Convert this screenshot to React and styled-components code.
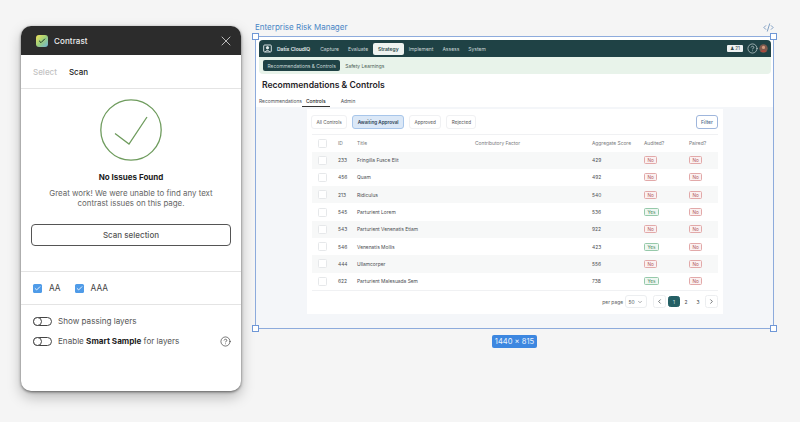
import React from "react";
import styled, { createGlobalStyle } from "styled-components";
import { X, Check, ChevronLeft, ChevronRight, ChevronDown, CodeXml, CircleHelp } from "lucide-react";

const Global = createGlobalStyle`
  html, body { margin: 0; padding: 0; background: #f5f5f5; }
  body { font-family: Inter, "Liberation Sans", sans-serif; width: 800px; height: 422px; overflow: hidden; }
`;
const Page = styled.div`
  display: flex; align-items: flex-start; gap: 14px; padding: 20px 0 0 21px;
`;
const Panel = styled.section`
  width: 220px; height: 365px; margin-top: 6px; background: #fff; border-radius: 10px;
  box-shadow: 0 1px 3px rgba(0,0,0,.55), 0 6px 14px rgba(0,0,0,.25);
  display: flex; flex-direction: column; overflow: hidden; color: #333;
`;
const PanelHead = styled.header`
  height: 29px; flex: none; background: #2c2c2c; color: #eee; display: flex; align-items: center;
  padding: 0 7px 0 15px; gap: 6px; font-size: 8px; font-weight: 500; letter-spacing: .1px;
  svg.close { margin-left: auto; }
`;
const Logo = styled.div`
  width: 12px; height: 12px; border-radius: 3px; background: linear-gradient(135deg,#f2e25a 0%,#9ccf7c 50%,#6fb3d8 100%);
  display: flex; align-items: center; justify-content: center; color: #1d3b2a;
`;
const PanelTabs = styled.nav`
  height: 33px; flex: none; display: flex; align-items: center; gap: 12px; padding: 0 12px; font-size: 8px;
  font-weight: 500; border-bottom: 1px solid #e4e4e4; box-sizing: content-box;
`;
const PanelTab = styled.span`
  color: ${p => (p.$on ? "#222" : "#c2c2c2")};
`;
const Result = styled.div`
  height: 183px; flex: none; display: flex; flex-direction: column; align-items: center; padding-top: 10px; box-sizing: border-box;
  border-bottom: 1px solid #e4e4e4;
`;
const ResultTitle = styled.h2`
  margin: 10px 0 0; font-size: 8px; line-height: 12px; font-weight: 700; color: #1c1c1c;
`;
const ResultText = styled.p`
  margin: 5px 0 0; font-size: 7.9px; line-height: 10px; text-align: center; color: #666;
`;
const ScanButton = styled.button`
  margin-top: 16px; width: 200px; height: 22px; box-sizing: border-box; background: #fff; border: 1px solid #555; border-radius: 4px;
  font: 500 8px Inter, sans-serif; color: #555;
`;
const Levels = styled.div`
  height: 32px; flex: none; display: flex; align-items: center; gap: 14px; padding: 0 12px; border-bottom: 1px solid #e4e4e4;
`;
const Level = styled.label`
  display: flex; align-items: center; gap: 7px; font-size: 8.3px; color: #444;
`;
const Box = styled.span`
  width: 9px; height: 9px; border-radius: 1.5px; background: #4f9be8; color: #fff; display: flex; align-items: center; justify-content: center;
`;
const Options = styled.div`
  display: flex; flex-direction: column; gap: 10px; padding: 11px 10.5px 0 12px;
`;
const Option = styled.div`
  height: 10px; display: flex; align-items: center; gap: 6px; font-size: 8.1px; color: #555;
  b { color: #222; font-weight: 700; }
  svg { margin-left: auto; color: #222; }
`;
const Toggle = styled.span`
  position: relative; width: 19px; height: 9px; box-sizing: border-box; border: 1px solid #444; border-radius: 5px; flex: none;
  &::before { content: ""; position: absolute; left: -1px; top: -1px; width: 9px; height: 9px; box-sizing: border-box; border: 1px solid #444; border-radius: 50%; background: #fff; }
`;
const Work = styled.div`
  width: 519px; display: flex; flex-direction: column;
`;
const WorkHead = styled.div`
  height: 16px; padding-bottom: 2px; box-sizing: border-box; display: flex; align-items: center; justify-content: space-between; color: #4a86c5;
  font-size: 8px; svg { color: #3f6fa8; }
`;
const Frame = styled.div`
  position: relative; height: 293px; box-sizing: border-box; border: 1px solid #8dabdc; background: #f4f6f9; display: flex; flex-direction: column;
`;
const Handle = styled.i`
  position: absolute; width: 5px; height: 5px; background: #fff; border: 1px solid #6f97d6;
  left: ${p => (p.$r ? "auto" : "-4px")}; right: ${p => (p.$r ? "-4px" : "auto")};
  top: ${p => (p.$b ? "auto" : "-4px")}; bottom: ${p => (p.$b ? "-4px" : "auto")};
`;
const AppTop = styled.div`
  background: #fff; height: 70px; flex: none; padding: 3px 2px 0 3px; box-sizing: border-box;
`;
const NavBar = styled.div`
  height: 17px; background: #1f4245; border-radius: 4px 4px 0 0; display: flex; align-items: center; padding: 0 3px 0 4px; color: #c9d6d6; font-size: 5px;
`;
const Brand = styled.span`
  display: flex; align-items: center; gap: 5px; color: #e8efef; font-weight: 600; margin-right: 10px;
`;
const NavItem = styled.span`
  padding: 0 ${p => (p.$on ? "5px" : "0")}; height: 12px; display: flex; align-items: center; margin-right: ${p => (p.$on ? "5px" : "9px")};
  margin-left: ${p => (p.$on ? "-4px" : "0")};
  background: ${p => (p.$on ? "#eef3f0" : "transparent")}; color: ${p => (p.$on ? "#2b4a4a" : "#c9d6d6")}; border-radius: 2px; font-weight: ${p => (p.$on ? 600 : 400)};
`;
const NavRight = styled.span`
  margin-left: auto; display: flex; align-items: center; gap: 1px;
`;
const Count = styled.span`
  background: #eef2f2; color: #33494a; font-size: 4.6px; border-radius: 1px; width: 16px; text-align: center; height: 7px; line-height: 7px; margin-right: 3px;
`;
const SubBar = styled.div`
  height: 17px; background: #e8f3ea; border-radius: 0 0 4px 4px; display: flex; align-items: center; padding: 0 4px; gap: 5px; font-size: 4.9px; color: #4d5f55;
`;
const SubItem = styled.span`
  padding: 0 ${p => (p.$on ? "4.5px" : "0")}; height: 11px; display: flex; align-items: center; border-radius: 2px;
  background: ${p => (p.$on ? "#1f4245" : "transparent")}; color: ${p => (p.$on ? "#c8d8d8" : "#4d5f55")};
`;
const AppTitle = styled.h1`
  margin: 5px 0 0 3px; font-size: 8.6px; line-height: 12px; font-weight: 600; color: #1f2328;
`;
const Tabs = styled.div`
  display: flex; align-items: flex-end; height: 14px; margin-top: 2px; font-size: 4.9px; color: #4f5358;
`;
const TabItem = styled.span`
  padding: 2px ${p => p.$px || 0}px 1px; line-height: 7px; margin-left: ${p => p.$ml || 0}px;
  border-bottom: 1px solid ${p => (p.$on ? "#333" : "transparent")};
  ${p => p.$on && "color: #222; font-weight: 500;"}
`;
const Card = styled.div`
  margin: 2px 0 0 51px; width: 416px; height: 205px; box-sizing: border-box; background: #fff; padding: 6px 5px 0 4px; display: flex; flex-direction: column;
`;
const Filters = styled.div`
  display: flex; align-items: center; gap: 5px; height: 14px;
`;
const Chip = styled.span`
  height: 14px; box-sizing: border-box; display: flex; align-items: center; padding: 0 4.5px; font-size: 4.65px; border-radius: 3px;
  border: 1px solid ${p => (p.$on ? "#a8c6ea" : "#f0f1f3")}; background: ${p => (p.$on ? "#dbe8f7" : "#fff")}; color: ${p => (p.$on ? "#2c3f55" : "#555")};
  font-weight: ${p => (p.$on ? 600 : 400)};
`;
const FilterBtn = styled(Chip)`
  margin-left: auto; border-color: #9fb6dc; color: #4f6a8c; font-weight: 500; font-size: 5px; padding: 0 4px;
`;
const Table = styled.div`
  margin: 5px 0 0 1px; border-top: 1px solid #f0f1f3; border-bottom: 1px solid #f0f1f3; display: flex; flex-direction: column;
`;
const Row = styled.div`
  height: ${p => (p.$head ? 16.5 : 17.3)}px; display: grid; grid-template-columns: 26px 19px 118px 117px 52px 45px 1fr; align-items: center; font-size: 4.9px;
  background: ${p => (p.$alt ? "#f7f8f8" : "#fff")}; color: ${p => (p.$head ? "#77797c" : "#4b4e52")};
`;
const RowCheck = styled.span`
  width: 7px; height: 7px; margin-left: 6px; border: 1px solid #e6e8ea; border-radius: 1.5px; background: #fff;
`;
const Tag = styled.span`
  justify-self: start; height: 8px; line-height: 6.5px; box-sizing: border-box; padding: 0 2.5px; border-radius: 1.5px; font-size: 4.7px;
  border: 1px solid ${p => (p.$yes ? "#96c9aa" : "#e2a9a9")}; background: ${p => (p.$yes ? "#eef7f1" : "#fbf1f1")}; color: ${p => (p.$yes ? "#4a8a63" : "#b05a5a")};
`;
const Pager = styled.div`
  margin-top: 4px; height: 14px; display: flex; align-items: center; justify-content: flex-end; font-size: 4.9px; color: #55585c;
`;
const PerPage = styled.span`
  margin: 0 6px 0 1.5px; width: 22.5px; height: 13px; box-sizing: border-box; padding: 0 3px; border: 1px solid #eceef0; border-radius: 3px; display: flex; align-items: center; justify-content: space-between;
`;
const PageBtn = styled.span`
  width: ${p => (p.$box ? 13 : 12)}px; height: ${p => (p.$box ? 13 : 11)}px; margin-left: ${p => p.$gap || 0}px; box-sizing: border-box; display: flex; align-items: center; justify-content: center; border-radius: 2.5px;
  border: 1px solid ${p => (p.$on ? "#256065" : p.$box ? "#eceef0" : "transparent")}; background: ${p => (p.$on ? "#256065" : "#fff")}; color: ${p => (p.$on ? "#cfe3e3" : "#44474b")};
`;
const Badge = styled.div`
  align-self: center; margin-top: 6px; height: 13px; padding: 0 3px; background: #3d87e0; color: #e9f2fc; font-size: 7.6px; line-height: 13px; border-radius: 2px;
`;

const rows = [
  ["233", "Fringilla Fusce Elit", "429", false],
  ["456", "Quam", "492", false],
  ["213", "Ridiculus", "540", false],
  ["545", "Parturient Lorem", "536", true],
  ["543", "Parturient Venenatis Etiam", "922", false],
  ["546", "Venenatis Mollis", "423", true],
  ["444", "Ullamcorper", "556", false],
  ["622", "Parturient Malesuada Sem", "738", true],
];

export default function App() {
  return (
    <Page>
      <Global />
      <Panel>
        <PanelHead>
          <Logo><Check size={8} strokeWidth={3} /></Logo>
          <span>Contrast</span>
          <X className="close" size={16} strokeWidth={1.1} />
        </PanelHead>
        <PanelTabs><PanelTab>Select</PanelTab><PanelTab $on>Scan</PanelTab></PanelTabs>
        <Result>
          <svg width="62" height="62" viewBox="0 0 62 62" fill="none" stroke="#6f9c5e">
            <circle cx="31" cy="31" r="30.2" strokeWidth="1.3" />
            <path d="M15 34.5 L29 45 L47 18" strokeWidth="1.3" />
          </svg>
          <ResultTitle>No Issues Found</ResultTitle>
          <ResultText>Great work! We were unable to find any text<br />contrast issues on this page.</ResultText>
          <ScanButton>Scan selection</ScanButton>
        </Result>
        <Levels>
          <Level><Box><Check size={7} strokeWidth={3} /></Box>AA</Level>
          <Level><Box><Check size={7} strokeWidth={3} /></Box>AAA</Level>
        </Levels>
        <Options>
          <Option><Toggle />Show passing layers</Option>
          <Option><Toggle /><span>Enable <b>Smart Sample</b> for layers</span><CircleHelp size={11} strokeWidth={1.3} /></Option>
        </Options>
      </Panel>
      <Work>
        <WorkHead><span>Enterprise Risk Manager</span><CodeXml size={11} strokeWidth={1.4} /></WorkHead>
        <Frame>
          <Handle /><Handle $r /><Handle $b /><Handle $r $b />
          <AppTop>
            <NavBar>
              <Brand>
                <svg width="9" height="9" viewBox="0 0 9 9" fill="none" stroke="#e8efef" strokeWidth=".9"><rect x=".7" y="1" width="7.6" height="7" rx="1" /><circle cx="4.5" cy="3.8" r="1.2" fill="#e8efef" /><path d="M2.5 8 C2.5 6 6.5 6 6.5 8" /></svg>
                Datix CloudIQ
              </Brand>
              <NavItem>Capture</NavItem><NavItem>Evaluate</NavItem><NavItem $on>Strategy</NavItem><NavItem>Implement</NavItem><NavItem>Assess</NavItem><NavItem>System</NavItem>
              <NavRight>
                <Count>♟ 21</Count>
                <CircleHelp size={11} strokeWidth={1.3} color="#e4ecec" />
                <svg width="9" height="9" viewBox="0 0 9 9"><circle cx="4.5" cy="4.5" r="4.2" fill="#7d5a4e" /><circle cx="4.5" cy="3.4" r="1.6" fill="#d39a7e" /><path d="M1.6 8 C2.2 5.4 6.8 5.4 7.4 8" fill="#a8483d" /></svg>
              </NavRight>
            </NavBar>
            <SubBar><SubItem $on>Recommendations & Controls</SubItem><SubItem>Safety Learnings</SubItem></SubBar>
            <AppTitle>Recommendations & Controls</AppTitle>
            <Tabs>
              <TabItem>Recommendations</TabItem>
              <TabItem $on $px={4}>Controls</TabItem>
              <TabItem $ml={11}>Admin</TabItem>
            </Tabs>
          </AppTop>
          <Card>
            <Filters>
              <Chip>All Controls</Chip><Chip $on>Awaiting Approval</Chip><Chip>Approved</Chip><Chip>Rejected</Chip>
              <FilterBtn>Filter</FilterBtn>
            </Filters>
            <Table>
              <Row $head><RowCheck /><span>ID</span><span>Title</span><span>Contributory Factor</span><span>Aggregate Score</span><span>Audited?</span><span>Paired?</span></Row>
              {rows.map(([id, title, score, yes], i) => (
                <Row key={id} $alt={i % 2 === 0}>
                  <RowCheck /><span>{id}</span><span>{title}</span><span />
                  <span>{score}</span><Tag $yes={yes}>{yes ? "Yes" : "No"}</Tag><Tag>No</Tag>
                </Row>
              ))}
            </Table>
            <Pager>
              <span>per page</span>
              <PerPage>50<ChevronDown size={6} /></PerPage>
              <PageBtn $box><ChevronLeft size={7} strokeWidth={2.5} /></PageBtn>
              <PageBtn $on $gap={2}>1</PageBtn><PageBtn>2</PageBtn><PageBtn>3</PageBtn>
              <PageBtn $box $gap={1}><ChevronRight size={7} strokeWidth={2.5} /></PageBtn>
            </Pager>
          </Card>
        </Frame>
        <Badge>1440 × 815</Badge>
      </Work>
    </Page>
  );
}
